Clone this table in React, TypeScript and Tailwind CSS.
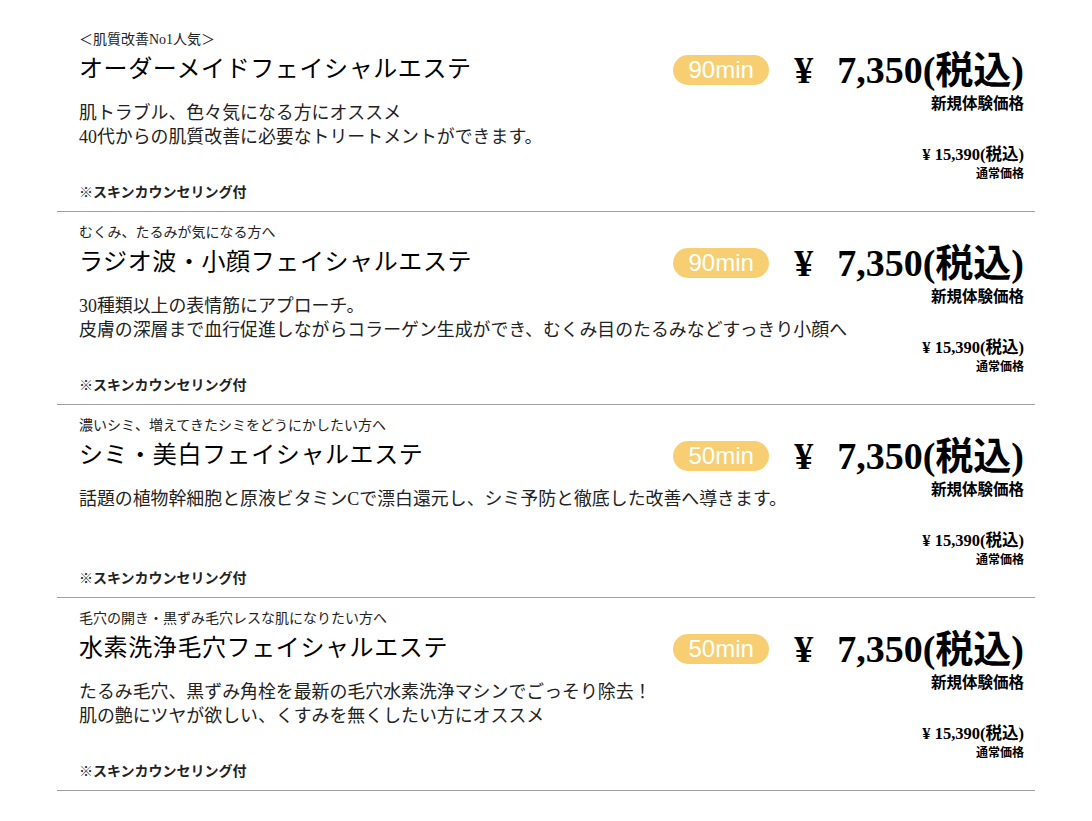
const menus = [
  {
    label: "＜肌質改善No1人気＞",
    title: "オーダーメイドフェイシャルエステ",
    desc: ["肌トラブル、色々気になる方にオススメ", "40代からの肌質改善に必要なトリートメントができます。"],
    min: "90min",
  },
  {
    label: "むくみ、たるみが気になる方へ",
    title: "ラジオ波・小顔フェイシャルエステ",
    desc: ["30種類以上の表情筋にアプローチ。", "皮膚の深層まで血行促進しながらコラーゲン生成ができ、むくみ目のたるみなどすっきり小顔へ"],
    min: "90min",
  },
  {
    label: "濃いシミ、増えてきたシミをどうにかしたい方へ",
    title: "シミ・美白フェイシャルエステ",
    desc: ["話題の植物幹細胞と原液ビタミンCで漂白還元し、シミ予防と徹底した改善へ導きます。"],
    min: "50min",
  },
  {
    label: "毛穴の開き・黒ずみ毛穴レスな肌になりたい方へ",
    title: "水素洗浄毛穴フェイシャルエステ",
    desc: ["たるみ毛穴、黒ずみ角栓を最新の毛穴水素洗浄マシンでごっそり除去！", "肌の艶にツヤが欲しい、くすみを無くしたい方にオススメ"],
    min: "50min",
  },
];

const serif = "font-['Liberation_Serif','Noto_Sans_CJK_JP',serif]";

const MenuRow = ({ m }: { m: (typeof menus)[number] }) => {
  return (
    <div className="grid border-b border-[#a0a0a0] pl-[22px] pr-[11px] pt-[11px] pb-[8px] h-[193px]">
      {/* left: texts, long lines may run under the price column */}
      <div className="[grid-area:1/1] flex flex-col">
        <p className="text-[14px] leading-[20px] text-[#222]">{m.label}</p>
        <h3 className="text-[24px] leading-[32px] mt-[3px] text-black tracking-[0.6px]">{m.title}</h3>
        <div className="mt-[16px] text-[17.9px] leading-[24px] text-[#222]">
          {m.desc.map((d) => (
            <p key={d} className="whitespace-nowrap">{d}</p>
          ))}
        </div>
        <p className="mt-auto text-[14px] leading-[20px] font-bold text-[#222]">※スキンカウンセリング付</p>
      </div>
      <div className="[grid-area:1/1] justify-self-end self-start flex flex-col items-end">
        <div className="flex items-center mt-[18px]">
          <span className="bg-[#f7cf72] text-white rounded-full w-[96px] h-[30px] flex items-center justify-center text-[24px] leading-none font-['Liberation_Sans',sans-serif] mr-[25px]">
            {m.min}
          </span>
          <span className="text-[38px] leading-[44px] font-bold text-black">
            ¥<span className="ml-[24px]">7,350(税込)</span>
          </span>
        </div>
        <p className="text-[15.5px] leading-[20px] font-bold mt-[2px]">新規体験価格</p>
        <p className="text-[16.5px] leading-[20px] font-bold mt-[31px]">¥ 15,390(税込)</p>
        <p className="text-[12px] leading-[16px] font-bold mt-[1px]">通常価格</p>
      </div>
    </div>
  );
};

const App = () => {
  return (
    <div className={`bg-white min-h-screen pt-[19px] ${serif}`}>
      <div className="w-[978px] mx-auto">
        {menus.map((m) => (
          <MenuRow key={m.title} m={m} />
        ))}
      </div>
    </div>
  );
};

export default App;
